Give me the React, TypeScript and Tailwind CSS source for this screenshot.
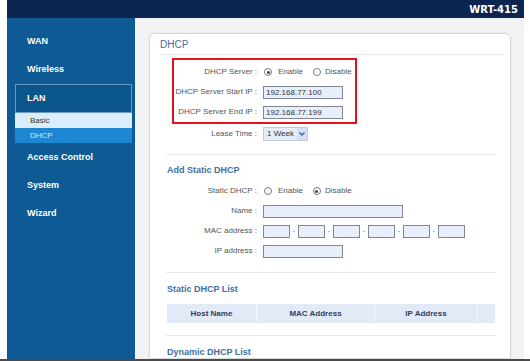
const Radio = ({ on }: { on?: boolean }) => (
  <span className="w-[8px] h-[8px] rounded-full border border-[#7a7a7a] bg-white flex items-center justify-center">
    {on && <span className="w-[3px] h-[3px] rounded-full bg-[#444]"></span>}
  </span>
)

const RadioPair = ({ enable }: { enable: boolean }) => (
  <div className="flex items-center text-[8px] text-[#555]">
    <span className="ml-[1px]"><Radio on={enable} /></span>
    <span className="ml-[6px]">Enable</span>
    <span className="ml-[10px]"><Radio on={!enable} /></span>
    <span className="ml-[4px]">Disable</span>
  </div>
)

const Input = ({ w, value }: { w: string; value?: string }) => (
  <div className={`${w} h-[13px] bg-[#e8eefc] border border-[#7f8794] text-[8px] leading-[11px] pl-[2px] text-[#333]`}>
    {value}
  </div>
)

const Row = ({ label, children }: { label: string; children: React.ReactNode }) => (
  <div className="flex items-center h-[20px]">
    <div className="w-[83px] text-right text-[8px] text-[#555] whitespace-nowrap">{label} :</div>
    <div className="ml-[6px]">{children}</div>
  </div>
)

const Heading = ({ text }: { text: string }) => (
  <div className="ml-[17px] mt-[9px] h-[16px] flex items-center text-[9px] font-bold text-[#40709f]">{text}</div>
)

const Divider = ({ mt }: { mt: string }) => (
  <div className={`${mt} ml-[16px] mr-[14px] border-b border-[#e9e9e9]`}></div>
)

const NavItem = ({ text }: { text: string }) => (
  <div className="h-[28px] flex items-center pl-[20px] text-[9px] font-bold text-white">{text}</div>
)

export default function App() {
  return (
    <div className="w-[530px] h-[361px] bg-white pl-[7px] pr-[6px] border-b-2 border-[#4b4b4b] overflow-hidden flex flex-col font-['Liberation_Sans',Arial,sans-serif]">
      <div className="h-[18px] shrink-0 bg-[#0b2550] flex items-center justify-end pr-[6px]">
        <span className="text-[10px] font-bold text-white font-['DejaVu_Sans',sans-serif]">WRT-415</span>
      </div>
      <div className="flex flex-1 min-h-0">
        <div className="w-[128px] shrink-0 bg-[#0d5a94] pt-[10px]">
          <NavItem text="WAN" />
          <NavItem text="Wireless" />
          <div className="ml-[8px] mr-[3px]">
            <div className="h-[29px] border border-[#6b98c4] bg-[#0c568e] flex items-center pl-[11px] text-[9px] font-bold text-white">LAN</div>
            <div className="h-[15px] bg-[#d9eefa] flex items-center pl-[15px] text-[8px] text-[#333]">Basic</div>
            <div className="h-[15px] bg-[#1d87d2] flex items-center pl-[15px] text-[8px] text-[#d4e6f6]">DHCP</div>
          </div>
          <div className="mt-[1px]">
            <NavItem text="Access Control" />
            <NavItem text="System" />
            <NavItem text="Wizard" />
          </div>
        </div>
        <div className="flex-1 bg-[#f1f2f4] pt-[15px] pl-[14px] pr-[13px] min-h-0">
          <div className="h-full bg-white border border-[#d9d9d9] rounded-t-[6px] shadow-[0_0_2px_rgba(0,0,0,0.08)] overflow-hidden">
            <div className="ml-[10px] mr-[7px] h-[21px] flex items-center border-b border-[#e9e9e9] text-[10px] text-[#3e6e9e]">DHCP</div>
            <div className="ml-[22px] mt-[3px] w-[185px] border-2 border-[#e0101e] pt-[2px]">
              <Row label="DHCP Server"><RadioPair enable /></Row>
              <Row label="DHCP Server Start IP"><Input w="w-[80px]" value="192.168.77.100" /></Row>
              <Row label="DHCP Server End IP"><Input w="w-[80px]" value="192.168.77.199" /></Row>
            </div>
            <div className="ml-[24px]">
              <Row label="Lease Time">
                <div className="w-[45px] h-[14px] bg-[#e4ecf8] border border-[#c3cbd9] flex items-center text-[8px] text-[#333]">
                  <span className="pl-[3px] flex-1">1 Week</span>
                  <span className="w-[10px] h-full bg-[#d3dff2] flex items-center justify-center">
                    <svg width="6" height="4" viewBox="0 0 6 4"><path d="M0.5 0.5 L3 3 L5.5 0.5" fill="none" stroke="#2f5ea8" strokeWidth="1.3" /></svg>
                  </span>
                </div>
              </Row>
            </div>
            <Divider mt="mt-[10px]" />
            <div className="ml-[17px] mt-[8px] h-[16px] flex items-center text-[9px] font-bold text-[#40709f]">Add Static DHCP</div>
            <div className="ml-[24px] mt-[2px]">
              <Row label="Static DHCP"><RadioPair enable={false} /></Row>
              <Row label="Name"><Input w="w-[140px]" /></Row>
              <Row label="MAC address">
                <div className="flex items-center">
                  {[0, 1, 2, 3, 4, 5].map((i) => (
                    <div key={i} className="flex items-center">
                      {i > 0 && <span className="w-[8px] text-center text-[7px] text-[#777]">-</span>}
                      <Input w="w-[27px]" />
                    </div>
                  ))}
                </div>
              </Row>
              <Row label="IP address"><Input w="w-[80px]" /></Row>
            </div>
            <Divider mt="mt-[11px]" />
            <Heading text="Static DHCP List" />
            <div className="ml-[17px] mr-[15px] mt-[6px] h-[19px] bg-[#e2eaf7] flex text-[8px] font-bold text-[#2d3e5e]">
              <div className="w-[90px] flex items-center justify-center border-r border-[#f4f7fc]">Host Name</div>
              <div className="w-[118px] flex items-center justify-center border-r border-[#f4f7fc]">MAC Address</div>
              <div className="w-[103px] flex items-center justify-center border-r border-[#f4f7fc]">IP Address</div>
              <div className="flex-1"></div>
            </div>
            <Divider mt="mt-[12px]" />
            <Heading text="Dynamic DHCP List" />
          </div>
        </div>
      </div>
    </div>
  )
}
